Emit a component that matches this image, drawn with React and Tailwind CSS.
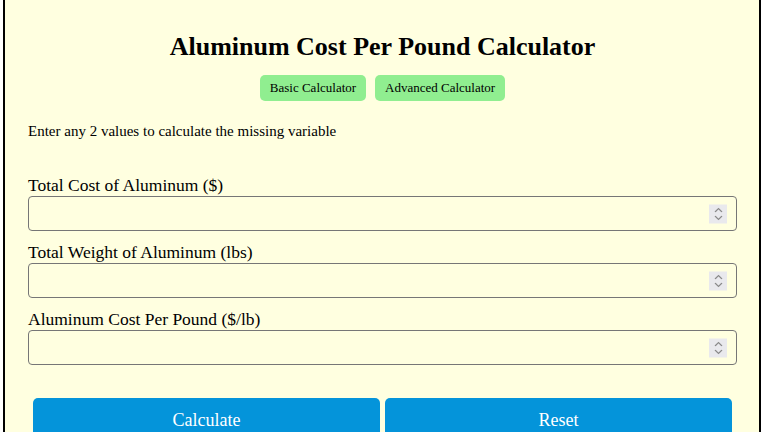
const fields = [
  'Total Cost of Aluminum ($)',
  'Total Weight of Aluminum (lbs)',
  'Aluminum Cost Per Pound ($/lb)',
];

function Spinner() {
  return (
    <div className="pointer-events-none absolute right-[10px] top-1/2 flex h-[19px] w-[18px] -translate-y-1/2 flex-col items-center justify-center gap-[3px] bg-[#e9e9ed]">
      <svg width="9" height="5" viewBox="0 0 9 5" fill="none" stroke="#8a8a8a" strokeWidth="1.2">
        <path d="M1 4.5 L4.5 1 L8 4.5" />
      </svg>
      <svg width="9" height="5" viewBox="0 0 9 5" fill="none" stroke="#8a8a8a" strokeWidth="1.2">
        <path d="M1 0.5 L4.5 4 L8 0.5" />
      </svg>
    </div>
  );
}

export default function App() {
  return (
    <div className="min-h-[432px] bg-white font-['Liberation_Serif',serif] text-black">
      <div className="ml-[3px] w-[758px] min-h-[432px] border-x-2 border-black bg-[#ffffe0] pl-[23px] pr-[22px] pt-[32px]">
        <h1 className="text-center text-[26px] font-bold leading-[30px]">
          Aluminum Cost Per Pound Calculator
        </h1>
        <div className="mt-[13px] flex justify-center gap-[9px]">
          <button className="h-[26px] rounded-[5px] bg-[#90ee90] px-[10px] text-[13px]">
            Basic Calculator
          </button>
          <button className="h-[26px] rounded-[5px] bg-[#90ee90] px-[10px] text-[13px]">
            Advanced Calculator
          </button>
        </div>
        <p className="mt-[20px] text-[15px] leading-[20px]">
          Enter any 2 values to calculate the missing variable
        </p>
        <div className="mt-[34px] flex flex-col gap-[11px]">
          {fields.map((label) => (
            <div key={label}>
              <label className="block text-[17.5px] leading-[21px]">{label}</label>
              <div className="relative">
                <input
                  type="text"
                  className="block h-[35px] w-full rounded-[4px] border border-[#767676] bg-transparent px-2"
                />
                <Spinner />
              </div>
            </div>
          ))}
        </div>
        <div className="mt-[33px] flex gap-[5px] px-[5px]">
          <button className="h-[44px] flex-1 rounded-[5px] bg-[#0494da] text-[18px] text-white">
            Calculate
          </button>
          <button className="h-[44px] flex-1 rounded-[5px] bg-[#0494da] text-[18px] text-white">
            Reset
          </button>
        </div>
      </div>
    </div>
  );
}
